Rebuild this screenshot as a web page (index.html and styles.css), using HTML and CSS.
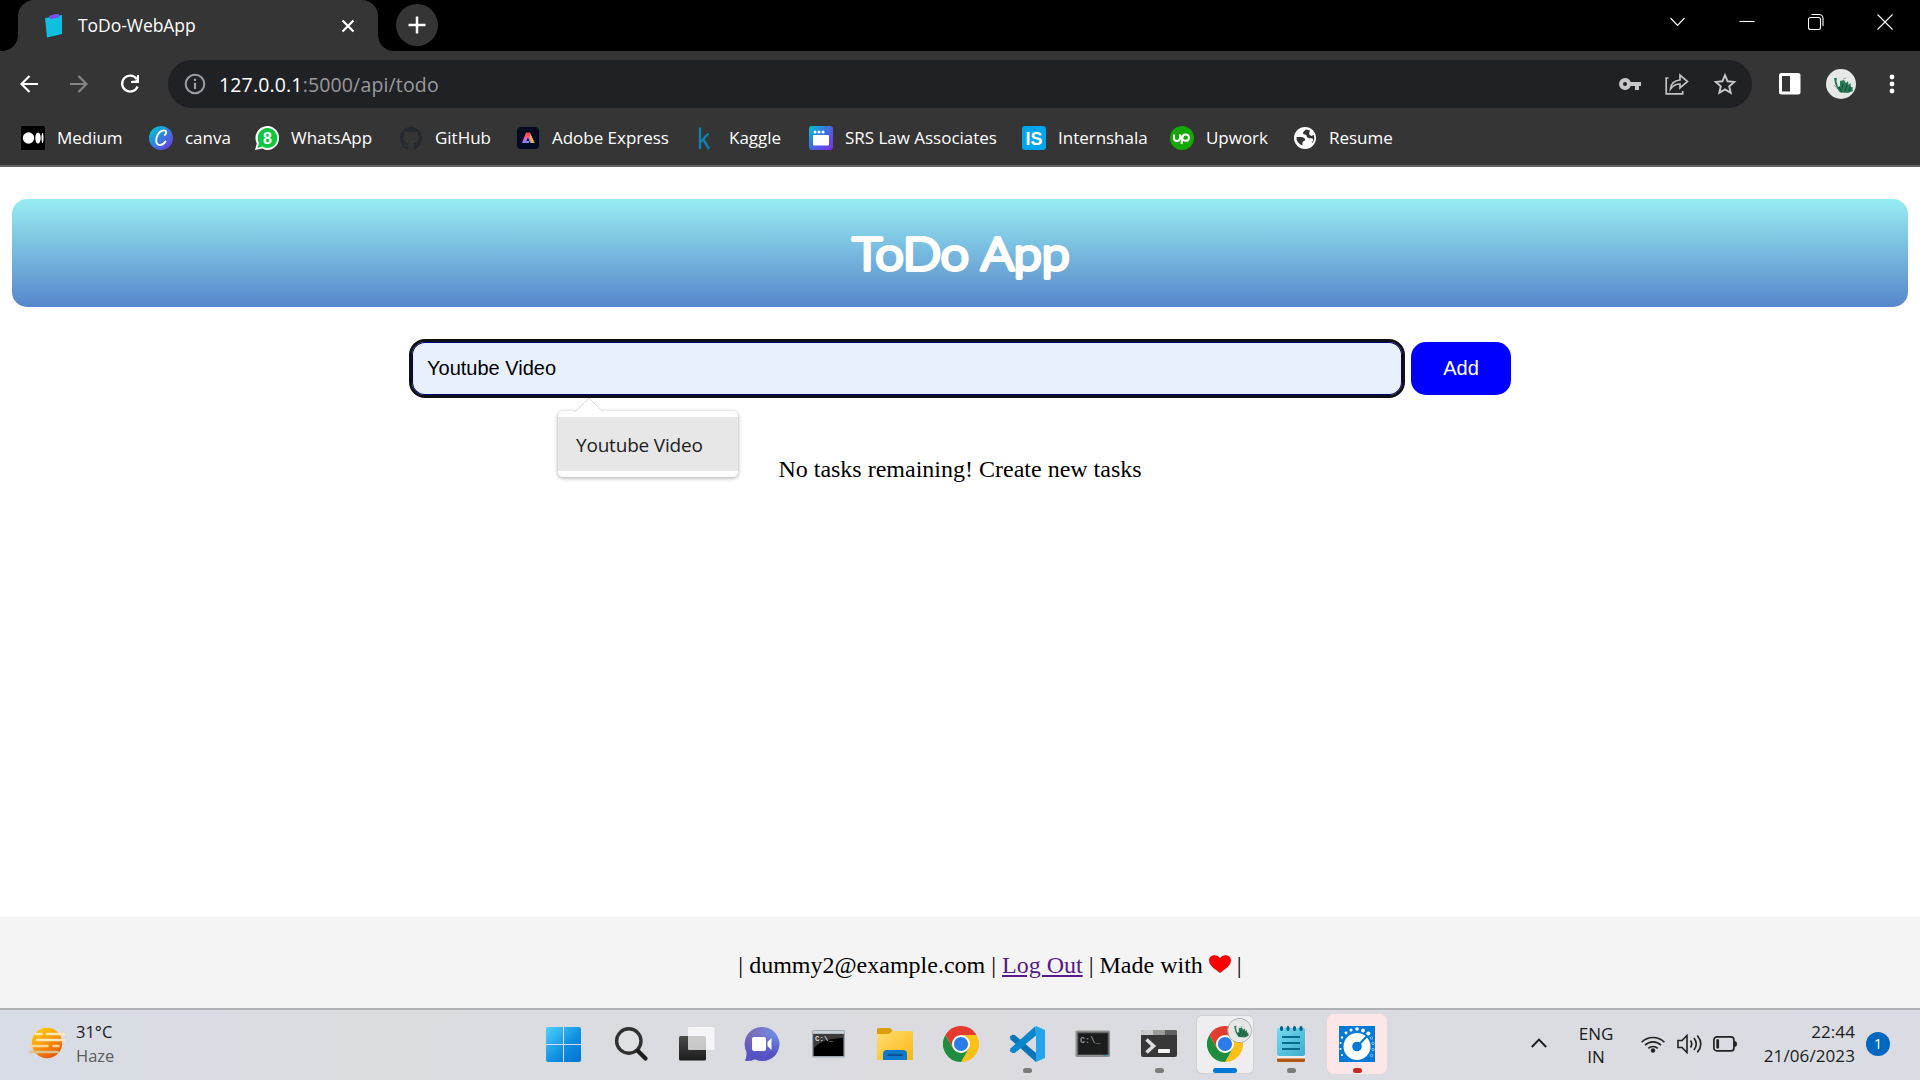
FILE: index.html
```html
<!DOCTYPE html>
<html lang="en">
<head>
<meta charset="utf-8">
<title>ToDo-WebApp</title>
<link rel="stylesheet" href="styles.css">
</head>
<body>
<svg width="0" height="0" class="defs" aria-hidden="true">
  <defs>
    <linearGradient id="gCanva" x1="0" y1="0" x2="1" y2="1"><stop offset=".1" stop-color="#00c4cc"/><stop offset=".55" stop-color="#3a76e0"/><stop offset="1" stop-color="#7d2ae8"/></linearGradient>
    <linearGradient id="gSrs" x1="0" y1="0" x2="1" y2="1"><stop offset="0" stop-color="#00c4cc"/><stop offset=".5" stop-color="#4668e2"/><stop offset="1" stop-color="#7d2ae8"/></linearGradient>
    <linearGradient id="gAdobe" x1=".3" y1="0" x2=".6" y2="1"><stop offset="0" stop-color="#ff3d1e"/><stop offset=".4" stop-color="#ff5a8a"/><stop offset=".7" stop-color="#b06cff"/><stop offset="1" stop-color="#4f9cff"/></linearGradient>
    <linearGradient id="gSun" x1="0" y1="0" x2=".6" y2="1"><stop offset="0" stop-color="#ffd400"/><stop offset=".5" stop-color="#fb9f0b"/><stop offset="1" stop-color="#e8590c"/></linearGradient>
    <linearGradient id="gWin" gradientUnits="userSpaceOnUse" x1="0" y1="0" x2="35" y2="35"><stop offset="0" stop-color="#4fd3ff"/><stop offset=".55" stop-color="#1290e2"/><stop offset="1" stop-color="#0072d0"/></linearGradient>
    <linearGradient id="gDark" x1="0" y1="0" x2="0" y2="1"><stop offset="0" stop-color="#4a4a4a"/><stop offset="1" stop-color="#1c1c1c"/></linearGradient>
    <linearGradient id="gChat" x1="0" y1="0" x2="1" y2="0"><stop offset="0" stop-color="#8163ab"/><stop offset="1" stop-color="#6b92ee"/></linearGradient>
    <linearGradient id="gChat2" x1="0" y1="0" x2="0" y2="1"><stop offset=".2" stop-color="#5a56c9" stop-opacity="0"/><stop offset=".8" stop-color="#5652c6"/></linearGradient>
    <linearGradient id="gFold" x1="0" y1="0" x2="1" y2="1"><stop offset="0" stop-color="#ffdd73"/><stop offset="1" stop-color="#fbb80f"/></linearGradient>
    <linearGradient id="gNote" x1="0" y1="0" x2="1" y2="1"><stop offset="0" stop-color="#74dcf2"/><stop offset="1" stop-color="#3fabcf"/></linearGradient>
    <symbol id="chrome" viewBox="0 0 36 36">
      <path d="M18 9H33.6A18 18 0 0 1 18 36L25.8 22.5Z" fill="#fbc116"/>
      <path d="M10.2 22.5 2.4 9A18 18 0 0 0 18 36L25.8 22.5Z" fill="#1e8e3e"/>
      <path d="M2.4 9A18 18 0 0 1 33.6 9H18L10.2 22.5Z" fill="#e33b2e"/>
      <circle cx="18" cy="18" r="9" fill="#fff"/><circle cx="18" cy="18" r="7.1" fill="#2b7bea"/>
    </symbol>
    <symbol id="dragon" viewBox="0 0 30 30">
      <circle cx="15" cy="15" r="15" fill="#e6e8e7"/>
      <path d="M8 9h3l-.5 3 1.500 6 2-1v-5l4-1 2 3 2-2 .5 4 2-2 .5 4 1.500 0 .5 4-5 2-8-.5-3-4-2-5Z" fill="#2b7a57"/>
      <path d="m13 18 3 5m1-8-1 5m5-4-2 6m5-4-1 4" stroke="#164d38" stroke-width="1.200"/>
      <path d="m8 16 3 3m6-9 3-1" stroke="#9ba9a4" fill="none"/>
    </symbol>
  </defs>
</svg>

<header class="browser">
  <div class="tabstrip">
    <div class="tab">
      <svg class="favicon" width="18" height="24" viewBox="0 0 18 24"><path d="M0 4 17 1V20L2 23.5Z" fill="#0fbfe0"/><path d="M4 2 7 1 10 0 14 0V3.500L5 5Z" fill="#7b4df0"/></svg>
      <span class="tab-title">ToDo-WebApp</span>
      <svg width="14" height="14" viewBox="0 0 14 14"><path d="m1.500 1.500 11 11m0-11-11 11" stroke="#fff" stroke-width="2.200"/></svg>
    </div>
    <div class="newtab"><svg width="18" height="18" viewBox="0 0 18 18"><path d="M9 .5v17M.5 9h17" stroke="#fff" stroke-width="2.500"/></svg></div>
    <div class="wincontrols">
      <svg viewBox="0 0 16 16"><path d="m.5 4 7 7.500 7-7.500" /></svg>
      <svg viewBox="0 0 16 16"><path d="M.5 7.500h15"/></svg>
      <svg viewBox="0 0 16 16"><rect x=".5" y="3.500" width="12" height="12" rx="2"/><path d="M3.500.5h7.500a4 4 0 0 1 4 4v7.500"/></svg>
      <svg viewBox="0 0 16 16"><path d="m.5.5 15 15m0-15-15 15"/></svg>
    </div>
  </div>

  <div class="toolbar">
    <div class="nav">
      <svg width="18" height="18" viewBox="0 0 18 18"><path d="M18 9H1.800M9.500 1 1.500 9l8 8" stroke="#fff" stroke-width="2.200" fill="none"/></svg>
      <svg width="18" height="18" viewBox="0 0 18 18"><path d="M0 9h16.200M8.500 1l8 8-8 8" stroke="#858585" stroke-width="2.200" fill="none"/></svg>
      <svg width="20" height="20" viewBox="0 0 20 20"><path d="M16.700 5A8 8 0 1 0 17.600 12.500" stroke="#fff" stroke-width="2.300" fill="none"/><path d="M19 1v8h-8V7l4.500-.5L17 5V1z" fill="#fff"/></svg>
    </div>
    <div class="omnibox">
      <svg width="22" height="22" viewBox="0 0 22 22"><circle cx="11" cy="11" r="9.300" stroke="#9aa0a6" stroke-width="2" fill="none"/><path d="M11 9.700v6.300M11 5.800v2.300" stroke="#9aa0a6" stroke-width="2.200"/></svg>
      <span class="url"><b>127.0.0.1</b>:5000/api/todo</span>
      <div class="omni-icons">
        <svg width="22" height="12" viewBox="0 0 22 12"><path d="M6 0a6 6 0 1 0 5.700 8H16v4h4V8h2V4H11.700A6 6 0 0 0 6 0Zm0 4a2 2 0 1 1 0 4 2 2 0 0 1 0-4Z" fill="#c7c7c9" fill-rule="evenodd"/></svg>
        <svg width="24" height="22" viewBox="0 0 24 22"><path d="M3.500 5H1.200v15.800h16.500V18M5.500 16c.5-5.500 3.500-8.500 9.500-9V2l7.500 6.500L15 15v-4c-4.500 0-7 1.500-9.500 5Z" stroke="#c2c2c4" stroke-width="1.700" fill="none"/></svg>
        <svg width="24" height="24" viewBox="0 0 24 24"><path d="m12 3.200 2.600 6.100 6.600.6-5 4.400 1.500 6.500L12 17.400l-5.700 3.400 1.500-6.500-5-4.400 6.600-.6Z" stroke="#c7c7c9" stroke-width="1.900" fill="none"/></svg>
      </div>
    </div>
    <div class="actions">
      <svg width="22" height="22" viewBox="0 0 22 22"><rect width="21.500" height="21.500" rx="2.500" fill="#fff"/><rect x="3" y="3" width="8" height="15.500" fill="#353535"/></svg>
      <svg width="30" height="30"><use href="#dragon"/></svg>
      <svg width="6" height="20" viewBox="0 0 6 20"><g fill="#fff"><circle cx="3" cy="3" r="2.400"/><circle cx="3" cy="10" r="2.400"/><circle cx="3" cy="17" r="2.400"/></g></svg>
    </div>
  </div>

  <nav class="bookmarks">
    <a><svg viewBox="0 0 24 24"><rect width="24" height="24" rx="1.500"/><circle cx="7.500" cy="12" r="5.700" fill="#fff"/><ellipse cx="17" cy="12" rx="2.700" ry="5.500" fill="#fff"/><ellipse cx="21.500" cy="12" rx="1" ry="5" fill="#fff"/></svg><span>Medium</span></a>
    <a><svg viewBox="0 0 24 24"><circle cx="12" cy="12" r="12" fill="url(#gCanva)"/><path d="M15.800 9c2-1.500 1.800-5-1.200-4.600C10 5 6.800 10.500 7.200 15c.4 5 6 5.500 9.300.5" stroke="#fff" stroke-width="1.900" fill="none" stroke-linecap="round"/></svg><span>canva</span></a>
    <a><svg viewBox="0 0 24 24"><path d="M12.500 0A11.500 12 0 1 1 7 22.500L0 24l1.800-6.500A12 12 0 0 1 12.500 0Z" fill="#fff"/><path d="M12.500 2a9.700 10 0 1 1-5 18.500L2.500 22 4 17A10 10 0 0 1 12.500 2Z" fill="#10c63f"/><text x="12.400" y="18" text-anchor="middle" class="glyph" font-size="16">8</text></svg><span>WhatsApp</span></a>
    <a><svg viewBox="0 0 24 24"><path d="M12 .5A12 12 0 0 0 8.200 23.500c.6.100.8-.3.800-.6v-2.200c-3.400.7-4-1.500-4-1.500-.6-1.400-1.300-1.800-1.300-1.800-1.100-.7 0-.7 0-.7 1.200 0 1.900 1.200 1.900 1.200 1.100 1.800 2.800 1.300 3.500 1 .1-.8.400-1.300.8-1.600-2.700-.3-5.500-1.300-5.500-5.900 0-1.300.5-2.400 1.200-3.200 0-.4-.5-1.600.2-3.200 0 0 1-.3 3.300 1.200a11 11 0 0 1 6 0C17.400 4.700 18.400 5 18.400 5c.7 1.600.2 2.800.1 3.200.8.800 1.200 1.900 1.200 3.200 0 4.600-2.800 5.600-5.500 5.900.5.400.8 1.100.8 2.200v3.400c0 .3.200.7.800.6A12 12 0 0 0 12 .5Z" fill="#23292f"/></svg><span>GitHub</span></a>
    <a class="adobe"><svg viewBox="0 0 24 24"><rect y="1" width="22" height="22" rx="4" fill="#020b22"/><path d="M9 6.500h4L17.500 17h-4.200L11 11.500 9.500 15H12v2H5Z" fill="url(#gAdobe)"/><path d="m13.500 8 4 9h-3.200L12.500 12Z" fill="#f3b31d"/></svg><span>Adobe Express</span></a>
    <a class="kaggle"><svg viewBox="0 0 24 24"><path d="M11 1.500V23M19.500 7.500l-8 8.500M14 13l6 10" stroke="#117fab" stroke-width="2.500" fill="none"/></svg><span>Kaggle</span></a>
    <a><svg viewBox="0 0 24 24"><rect width="24" height="24" rx="3" fill="url(#gSrs)"/><rect x="4" y="9" width="16" height="10.500" rx="1" fill="#fff"/><g fill="#fff"><circle cx="6" cy="6" r="1.500"/><circle cx="10" cy="6" r="1.500"/><circle cx="14" cy="6" r="1.500"/></g></svg><span>SRS Law Associates</span></a>
    <a><svg viewBox="0 0 24 24"><rect width="24" height="24" rx="3" fill="#00a5ec"/><text x="12" y="18.500" text-anchor="middle" class="glyph" font-size="18">IS</text></svg><span>Internshala</span></a>
    <a><svg viewBox="0 0 24 24"><circle cx="12" cy="12" r="12" fill="#14a800"/><path d="M4 8.500v3.500a3 3 0 0 0 6 0V8.500c1 3 2.500 6 5.500 6.300a3.200 3.200 0 1 0-3-3.500L11.500 18" stroke="#fff" stroke-width="2" fill="none"/></svg><span>Upwork</span></a>
    <a class="resume"><svg viewBox="0 0 24 24"><circle cx="11" cy="12" r="11" fill="#fff"/><path d="M2.500 11h4c2.500 0 5 1 4.500 3-.3 1.500-2.500 1-2.500 3v2.500A8 8 0 0 1 2.500 11ZM12 3.500c-1.500 1.500-3.500 2.500-3 4s3 .5 3.500 2 .5 2 2 2.500 4.500-.5 4.500 1.500-1.500 4-1.500 4l1.500-1A10 10 0 0 0 20 9l-3 1-2-2 1-3.500Z" fill="#353535"/></svg><span>Resume</span></a>
  </nav>
</header>

<main class="page">
  <h1 class="banner"><svg width="230" height="60" viewBox="0 0 230 60"><text x="7.500" y="47" textLength="217" lengthAdjust="spacingAndGlyphs">ToDo App</text></svg></h1>
  <form class="entry">
    <div class="field">
      <span>Youtube Video</span>
      <div class="suggest"><svg width="28" height="15" viewBox="0 0 28 15"><path d="M0 15 14 1 28 15" fill="#fff" stroke="#d8d8d8"/></svg><div>Youtube Video</div></div>
    </div>
    <div class="add">Add</div>
  </form>
  <p class="empty">No tasks remaining! Create new tasks</p>
</main>

<footer class="footer">| dummy2@example.com | <a>Log Out</a> | Made with <svg width="22" height="18" viewBox="0 0 22 18"><path d="M11 18C6 14 0 10.500 0 5.200 0 0 8-2 11 3.200 14-2 22 0 22 5.200 22 10.500 16 14 11 18Z" fill="#fe0000"/></svg> |</footer>

<div class="taskbar">
  <div class="weather">
    <svg width="36" height="32" viewBox="0 0 36 32"><circle cx="18" cy="16" r="15.200" fill="url(#gSun)"/><g stroke-width="2.600" stroke-linecap="round"><path d="M7 7h5.500M18 7h17" stroke="#fbe9b4"/><path d="M8 13h27" stroke="#fbe6bd"/><path d="M1.500 19h17M24.500 19h5" stroke="#fbd592"/><path d="M1.500 25h27" stroke="#dcc18d"/></g></svg>
    <div class="lines"><span>31°C</span><span class="dim">Haze</span></div>
  </div>

  <div class="apps">
    <div class="app"><svg class="start" width="36" height="36" viewBox="0 0 36 36"><path d="M2 0h15v17H0V2Q0 0 2 0ZM18 0h15q2 0 2 2v15H18ZM0 18h17v17H2q-2 0-2-2ZM18 18h17v15q0 2-2 2H18Z" fill="url(#gWin)"/></svg></div>
    <div class="app"><svg width="36" height="36" viewBox="0 0 36 36"><circle cx="15.800" cy="15" r="12.200" fill="#e5e6ea" fill-opacity=".5" stroke="#303030" stroke-width="3.400"/><path d="m25 25 7.500 7.500" stroke="#1e1e1e" stroke-width="4.200" stroke-linecap="round"/></svg></div>
    <div class="app"><svg width="36" height="36" viewBox="0 0 36 36"><rect y="10" width="27" height="24.500" rx="1.500" fill="url(#gDark)"/><rect x="9" y="1" width="26.500" height="23" rx="1" fill="#fff" fill-opacity=".72"/></svg></div>
    <div class="app chat"><svg width="36" height="36" viewBox="0 0 36 36"><path d="M18 1a17 17 0 1 1-7 32.300Q6 35.500 1 34.500q2-3 1.700-8.500A17 17 0 0 1 18 1Z" fill="url(#gChat)"/><path d="M18 1a17 17 0 1 1-7 32.300Q6 35.500 1 34.500q2-3 1.700-8.500A17 17 0 0 1 18 1Z" fill="url(#gChat2)"/><rect x="8" y="11" width="14" height="14" rx="2" fill="#fff"/><path d="m23.500 16 4-4v12l-4-4Z" fill="#fff"/></svg></div>
    <div class="app"><svg width="36" height="36" viewBox="0 0 36 36"><rect x="1" y="4" width="33" height="27.500" rx="1.500" fill="#9fa8b1"/><rect x="2" y="5" width="31" height="2.500" fill="#c9d0d6"/><rect x="2.500" y="8" width="30" height="22" fill="#000"/><path d="M3 8h29v4Q12 12 3 22Z" fill="#3b3b3b"/><text x="4" y="15" class="term" font-size="7.500">C:\_</text></svg></div>
    <div class="app"><svg width="36" height="36" viewBox="0 0 36 36"><path d="M1.500 2H13l3 3h18v8H0V3.500Q0 2 1.500 2Z" fill="#dd9e0a"/><path d="M0 8h12l3-3h20q1 0 1 1v28H0Z" fill="url(#gFold)"/><path d="M6 34v-6q0-4 4-4h16q4 0 4 4v6Z" fill="#0e78cc"/><path d="M10.500 29h15" stroke="#0b4c8a" stroke-width="1.800"/></svg></div>
    <div class="app"><svg width="36" height="36"><use href="#chrome"/></svg></div>
    <div class="app"><svg width="36" height="36" viewBox="0 0 36 36"><path d="m1 10.500 2.500-1.800 2.300.2L27 27v9L1.500 13.500Z" fill="#0a75b8"/><path d="m1.500 22.500 25-22.500L27 9.500 5.800 27l-2.500 0-2.500-2Z" fill="#0a86cc"/><path d="M27 0 36 4v28l-9 4Z" fill="#24a4ed"/></svg><i></i></div>
    <div class="app"><svg width="36" height="36" viewBox="0 0 36 36"><rect x=".5" y="4.500" width="34.500" height="26.500" rx="1.500" fill="#8e8e8e"/><rect x="3" y="7" width="30" height="21.500" fill="#1b1d1d" stroke="#3e3e3e"/><text x="5" y="16.500" class="term dimterm" font-size="8.500">C:\_</text><path d="M28.500 29.700h3" stroke="#1693c9"/></svg></div>
    <div class="app"><svg width="36" height="36" viewBox="0 0 36 36"><rect y="4" width="36" height="27" rx="2" fill="#373737"/><path d="M2 4h10v5H0V6q0-2 2-2Z" fill="#cacaca"/><path d="M12 4h12v5H12Z" fill="#9b9b9b"/><path d="M24 4h10q2 0 2 2v3H24Z" fill="#606060"/><path d="m5.500 13.500 7 6.500-7 6.500" stroke="#ddd" stroke-width="3.600" fill="none"/><rect x="17" y="23" width="12" height="4" rx=".8" fill="#f4f4f4"/></svg><i></i></div>
    <div class="app active"><svg width="36" height="36"><use href="#chrome"/></svg><svg class="profile" width="25" height="25" viewBox="0 0 30 30"><use href="#dragon" width="30" height="30"/></svg><i></i></div>
    <div class="app"><svg width="36" height="36" viewBox="0 0 36 36"><rect x="4" y="30" width="28" height="6" rx="1.500" fill="#b35713"/><rect x="4" y="28" width="28" height="4.500" fill="#f0ecea"/><rect x="4" y="2" width="28" height="28" rx="2" fill="url(#gNote)"/><path d="M9 11h18M9 17h18M9 23h18" stroke="#056a8e" stroke-width="1.800"/><path d="M8.500 1.500v2M15 1.500v2M21.500 1.500v2M28 1.500v2" stroke="#056381" stroke-width="3" stroke-linecap="round"/></svg><i></i></div>
    <div class="app alert"><svg width="36" height="36" viewBox="0 0 36 36"><path d="M0 0h36v36H0Z" fill="#0379d8"/><circle cx="18" cy="20.500" r="13.500" fill="#fff"/><circle cx="18" cy="20.500" r="4.800" fill="#0379d8"/><path d="m20 18.500 8.500-9" stroke="#0379d8" stroke-width="2"/><g fill="#fff"><circle cx="3" cy="29" r="1"/><circle cx="1.500" cy="23" r="1"/><circle cx="1.500" cy="17" r="1"/><circle cx="3" cy="11.500" r="1.200"/><circle cx="7" cy="7" r="1.400"/><circle cx="12" cy="4" r="1.600"/><circle cx="18" cy="3" r="1.800"/><circle cx="24" cy="4.500" r="1.900"/><circle cx="29.300" cy="7.500" r="2"/></g><g fill="none" stroke="#7fc0f3"><circle cx="32.500" cy="12" r="1.200"/><circle cx="34" cy="17.500" r="1.200"/><circle cx="34" cy="23.500" r="1.200"/><circle cx="32.500" cy="29.500" r="1.200"/></g></svg><i></i></div>
  </div>

  <div class="tray">
    <svg class="caret" width="16" height="10" viewBox="0 0 16 10"><path d="m.8 9 7.200-7.500L15.200 9" stroke="#1c1c1c" stroke-width="1.900" fill="none"/></svg>
    <div class="lines lang"><span>ENG</span><span>IN</span></div>
    <div class="status">
      <svg width="24" height="18" viewBox="0 0 24 18"><g fill="none" stroke="#222" stroke-width="1.600"><path d="M.6 7.200a16 16 0 0 1 22.800 0"/><path d="M4 10.200a11.300 11.300 0 0 1 16 0"/><path d="M7.300 13.400a6.800 6.800 0 0 1 9.400 0"/></g><circle cx="12" cy="15.500" r="2.200" fill="#222"/></svg>
      <svg width="25" height="20" viewBox="0 0 25 20"><g fill="none" stroke="#222" stroke-width="1.600"><path d="M1 6.500h4L10 1.500v17L5 13.500H1Z"/><path d="M13.500 6.500q2.500 3.500 0 7M17 4q4.500 6 0 12M20.300 1.500q7 8.500 0 17"/></g></svg>
      <svg width="24" height="16" viewBox="0 0 24 16"><rect x=".9" y=".9" width="20" height="14" rx="3" fill="none" stroke="#222" stroke-width="1.700"/><rect x="3.300" y="3.300" width="2.800" height="9.200" rx=".8" fill="#222"/><path d="M21 5q3 0 3 3t-3 3Z" fill="#222"/></svg>
    </div>
    <div class="lines clock"><span>22:44</span><span>21/06/2023</span></div>
    <div class="count">1</div>
  </div>
</div>
</body>
</html>
```
FILE: styles.css
```css
* { box-sizing: border-box; }
body {
  margin: 0;
  width: 1920px;
  height: 1080px;
  overflow: hidden;
  display: flex;
  flex-direction: column;
  background: #fff;
  font-family: "Open Sans", "Noto Sans", sans-serif;
}
svg { display: block; flex: none; }
.defs { position: absolute; }

/* browser chrome */
.browser { height: 167px; background: #353535; border-bottom: 2px solid #646464; color: #fff; }
.tabstrip { height: 51px; background: #000; display: flex; padding-left: 18px; }
.tab {
  width: 360px;
  height: 51px;
  position: relative;
  background: #353535;
  border-radius: 16px 16px 0 0;
  display: flex;
  align-items: center;
  padding: 0 23px 0 27px;
}
.tab::before, .tab::after {
  content: "";
  position: absolute;
  bottom: 0;
  width: 16px;
  height: 16px;
}
.tab::before { left: -16px; background: radial-gradient(circle at 0 0, #000 15.5px, #353535 16.5px); }
.tab::after { right: -16px; background: radial-gradient(circle at 100% 0, #000 15.5px, #353535 16.5px); }
.tab-title { flex: 1; margin: -2px 0 0 15px; font-size: 17.5px; letter-spacing: -.05px; }
.newtab {
  width: 42px;
  height: 42px;
  margin: 4px 0 0 18px;
  border-radius: 50%;
  background: #353535;
  display: grid;
  place-items: center;
}
.wincontrols { margin-left: auto; display: flex; gap: 53px; padding: 14px 27px 0 0; }
.wincontrols svg { width: 16px; height: 16px; fill: none; stroke: #fff; stroke-width: 1.1; }

.toolbar { height: 66px; display: flex; align-items: center; }
.nav { width: 168px; display: flex; gap: 32px; padding-left: 20px; align-items: center; }
.omnibox {
  width: 1584px;
  height: 48px;
  border-radius: 24px;
  background: #202125;
  display: flex;
  align-items: center;
  padding: 0 15px 0 16px;
}
.url { margin-left: 13px; font-size: 19.5px; letter-spacing: .15px; color: #999a9c; }
.url b { font-weight: 400; color: #fff; }
.omni-icons { margin-left: auto; display: flex; align-items: center; gap: 24px; }
.actions { display: flex; align-items: center; margin-left: 27px; }
.actions svg:nth-child(2) { margin: 0 33px 0 25px; }

.bookmarks {
  display: grid;
  grid-template-columns: 128px 106px 144px 118px 172px 120px 213px 148px 124px 110px;
  padding: 9px 0 0 21px;
}
.bookmarks a { display: flex; align-items: center; height: 24px; white-space: nowrap; font-size: 17px; }
.bookmarks span { margin-top: -2px; letter-spacing: -.02px; }
.bookmarks svg { width: 24px; height: 24px; margin-right: 12px; }
.bookmarks .adobe svg, .bookmarks .resume svg { margin-right: 11px; }
.bookmarks .kaggle svg { margin-right: 16px; }
.glyph { font-family: "Liberation Sans", sans-serif; font-weight: 700; fill: #fff; }

/* page */
.page { height: 750px; padding: 32px 12px 0; font-family: "Liberation Serif", serif; }
.banner {
  margin: 0;
  height: 108px;
  border-radius: 15px;
  background: linear-gradient(#97ecf2, #5786cb);
  display: flex;
  justify-content: center;
  align-items: center;
}
.banner text {
  font-family: Lato, sans-serif;
  font-size: 45px;
  font-weight: 300;
  fill: #fff;
  stroke: #fff;
  stroke-width: 4px;
  stroke-linejoin: round;
}
.entry { display: flex; align-items: center; justify-content: center; gap: 6px; height: 60px; margin-top: 31px; font: 20px "Liberation Sans", sans-serif; }
.field {
  position: relative;
  width: 996px;
  height: 59px;
  border: 3px solid #101014;
  border-radius: 16px;
  background: #e8f0fe;
  box-shadow: inset 0 0 0 1px #00007f;
  padding: 0 15px;
  display: flex;
  align-items: center;
}
.add { width: 100px; height: 53px; border-radius: 15px; background: #00f; color: #fff; display: grid; place-items: center; }
.suggest {
  position: absolute;
  left: 146px;
  top: 69px;
  width: 180px;
  height: 66px;
  padding: 6px 0;
  background: #fff;
  border-radius: 5px;
  box-shadow: 0 1px 4px rgba(0, 0, 0, .35);
  font: 19px "Open Sans", sans-serif;
  color: #222;
}
.suggest svg { position: absolute; left: 17px; top: -14px; }
.suggest div { height: 54px; line-height: 56px; background: #e7e7e7; padding-left: 18px; letter-spacing: -.2px; }
.empty { margin: 57px 0 0; text-align: center; font-size: 24px; line-height: 28px; }

.footer {
  height: 91px;
  background: #f4f4f4;
  padding: 0 0 0 60px;
  font: 24px/97px "Liberation Serif", serif;
  text-align: center;
}
.footer a { color: #551a8b; text-decoration: underline; }
.footer svg { display: inline-block; vertical-align: 0; }

/* taskbar */
.taskbar {
  height: 72px;
  border-top: 2px solid #aeb0b4;
  background: linear-gradient(90deg, #d8dce5, #dadce0 18%, #dbdbe0 50%, #d9dce2);
  display: grid;
  grid-template-columns: 532px 858px 530px;
  color: #1b1b1b;
}
.lines { display: flex; flex-direction: column; font-size: 16.5px; line-height: 24px; }
.dim { color: #5b5d61; }
.weather { display: flex; padding: 10px 0 0 29px; }
.weather svg { margin-top: 7px; }
.weather .lines { margin-left: 11px; }
.apps { display: flex; }
.app { width: 66px; height: 70px; position: relative; z-index: 0; display: flex; justify-content: center; padding-top: 16px; }
.app .start { margin: 1px 0 0 -2px; }
.chat svg { margin-left: -2px; }
.app i { position: absolute; bottom: 7px; left: 29px; width: 9px; height: 5px; border-radius: 3px; background: #7b7b7b; }
.app::before { content: ""; position: absolute; z-index: -1; }
.active::before { inset: 6px 5px 7px; border-radius: 5px; background: #eeeef1; box-shadow: 0 0 1px 1px #cfcfd4; }
.app.active i { width: 24px; left: 21px; background: #0078d7; }
.profile { position: absolute; left: 35px; top: 8px; border: 1px solid #a5a7a9; border-radius: 50%; }
.alert::before { inset: 4px 3px 6px; border-radius: 7px; background: #fde6e8; }
.app.alert i { background: #c62a20; }
.term { font-family: "Liberation Mono", monospace; font-weight: 700; fill: #ddd; }
.dimterm { fill: #929292; }
.tray { display: flex; align-items: flex-start; padding: 10px 0 0 141px; }
.caret { margin-top: 18px; }
.lang { width: 66px; margin: 2px 0 0 16px; text-align: center; font-size: 17px; line-height: 23px; }
.status { display: flex; align-items: center; gap: 12px; height: 48px; margin-left: 12px; }
.status svg:last-child { margin-left: -1px; }
.clock { width: 118px; text-align: right; font-size: 17px; letter-spacing: .1px; }
.count { width: 24px; height: 24px; margin: 12px 0 0 11px; border-radius: 50%; background: #0067c0; color: #fff; font-size: 15px; line-height: 23px; text-align: center; }
```
